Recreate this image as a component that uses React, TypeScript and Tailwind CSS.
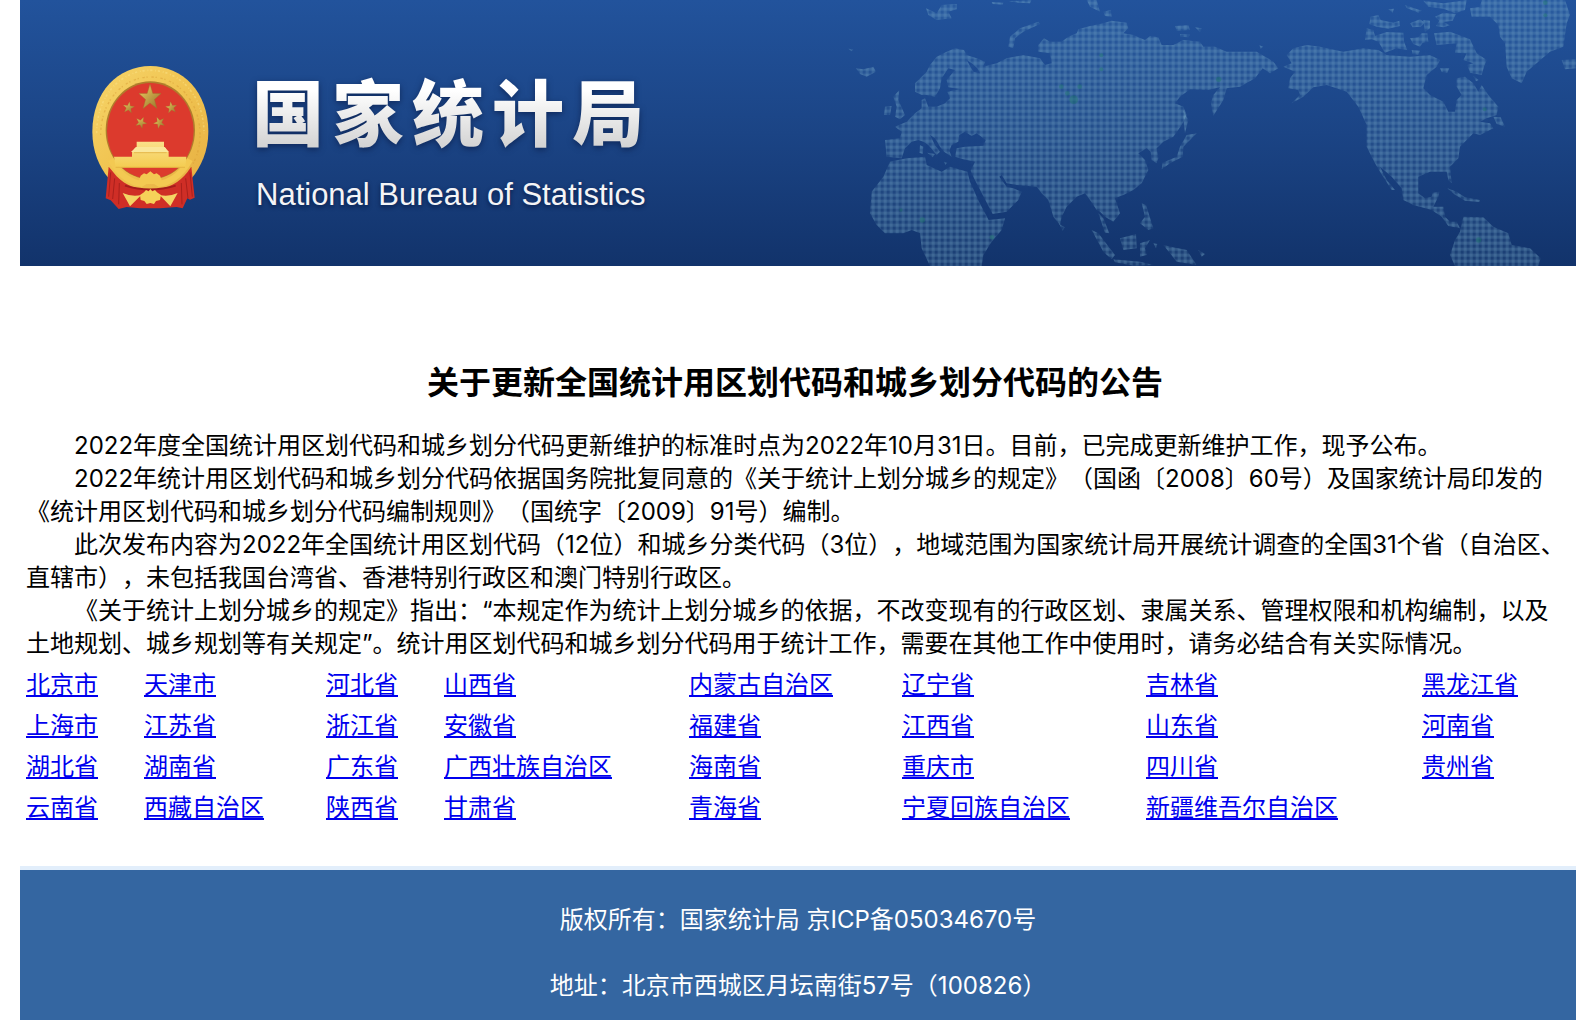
import React from "react";

const paragraphs = [
  "2022年度全国统计用区划代码和城乡划分代码更新维护的标准时点为2022年10月31日。目前，已完成更新维护工作，现予公布。",
  "2022年统计用区划代码和城乡划分代码依据国务院批复同意的《关于统计上划分城乡的规定》（国函〔2008〕60号）及国家统计局印发的《统计用区划代码和城乡划分代码编制规则》（国统字〔2009〕91号）编制。",
  "此次发布内容为2022年全国统计用区划代码（12位）和城乡分类代码（3位），地域范围为国家统计局开展统计调查的全国31个省（自治区、直辖市），未包括我国台湾省、香港特别行政区和澳门特别行政区。",
  "《关于统计上划分城乡的规定》指出：“本规定作为统计上划分城乡的依据，不改变现有的行政区划、隶属关系、管理权限和机构编制，以及土地规划、城乡规划等有关规定”。统计用区划代码和城乡划分代码用于统计工作，需要在其他工作中使用时，请务必结合有关实际情况。",
];

const provinces = [
  "北京市", "天津市", "河北省", "山西省", "内蒙古自治区", "辽宁省", "吉林省", "黑龙江省",
  "上海市", "江苏省", "浙江省", "安徽省", "福建省", "江西省", "山东省", "河南省",
  "湖北省", "湖南省", "广东省", "广西壮族自治区", "海南省", "重庆市", "四川省", "贵州省",
  "云南省", "西藏自治区", "陕西省", "甘肃省", "青海省", "宁夏回族自治区", "新疆维吾尔自治区",
];

const STAR = "M0,-10 L2.4,-3.2 9.5,-3.1 3.8,1.3 5.9,8.1 0,4 -5.9,8.1 -3.8,1.3 -9.5,-3.1 -2.4,-3.2Z";

function Emblem() {
  return (
    <svg width="140" height="165" viewBox="0 0 420 495" role="img" aria-label="国徽" className="shrink-0">
      <defs>
        <linearGradient id="gold" x1="0" y1="0" x2="1" y2="1">
          <stop offset="0" stopColor="#f6d56a" />
          <stop offset="0.5" stopColor="#f0c350" />
          <stop offset="1" stopColor="#e6ae42" />
        </linearGradient>
        <linearGradient id="star" x1="0" y1="0" x2="1" y2="1">
          <stop offset="0" stopColor="#f0cf62" />
          <stop offset="1" stopColor="#94702a" />
        </linearGradient>
        <linearGradient id="gate" x1="0" y1="0" x2="0" y2="1">
          <stop offset="0" stopColor="#fae08a" />
          <stop offset="1" stopColor="#f4cc50" />
        </linearGradient>
      </defs>
      <path d="M37,230 C37,110 115,33 211,33 C307,33 385,110 385,230 C385,290 362,335 335,370 L300,410 120,410 86,370 C58,335 37,290 37,230Z" fill="url(#gold)" />
      <path d="M50,235 C50,122 122,46 211,46 C300,46 372,122 372,235" fill="none" stroke="#fbe487" strokeWidth="5" strokeDasharray="7 8 3 5" opacity="0.5" />
      <path d="M62,240 C62,140 128,66 211,66 C294,66 360,140 360,240 C360,290 342,325 325,350" fill="none" stroke="#d99e35" strokeWidth="4" strokeDasharray="4 11 7 5" opacity="0.5" />
      <ellipse cx="211" cy="226" rx="134" ry="147" fill="#b07c2c" />
      <ellipse cx="211" cy="228" rx="130" ry="144" fill="#dc3a2d" />
      <path d="M86,335 L100,352 C125,385 160,402 200,404 L222,404 C262,402 300,382 322,352 L334,335 344,428 330,434 322,430 308,460 290,456 240,460 180,460 140,456 116,462 92,436 77,430Z" fill="#cf2e26" />
      <path d="M92,352 L86,425 M104,370 L98,432 M118,384 L116,448 M330,352 L337,425 M317,370 L324,430 M304,384 L306,448" stroke="#a9201c" strokeWidth="3" fill="none" />
      <path d="M135,392 Q210,415 287,392" stroke="#a41d1b" strokeWidth="6" fill="none" />
      <path d="M84,318 C105,355 140,392 185,396 L200,387 222,387 237,396 C282,392 318,355 338,318 L322,310 C303,345 272,370 245,376 L240,362 230,355 222,358 211,349 200,358 192,355 182,362 177,376 C148,370 118,345 100,310Z" fill="#f3c952" />
      <path d="M102,305 H156 V292 L164,288 V280 L170,276 V260 H252 V276 L258,280 V288 L266,292 V305 H319 L316,338 H107Z" fill="url(#gate)" />
      <path d="M153,291 L168,276 H254 L267,291Z" fill="#fae79b" />
      <path d="M107,337 H315 M162,293 H260" stroke="#dda93c" strokeWidth="2" fill="none" />
      <path d="M180,420 L192,412 198,405 206,409 211,402 217,409 225,405 231,412 243,420 240,435 228,438 222,447 211,444 200,447 193,438 182,435Z" fill="#f6d259" />
      <path d="M128,414 Q155,426 184,420 L150,454Z M293,414 Q267,426 239,420 L271,454Z" fill="#f4d465" />
      <g fill="url(#star)" stroke="#9a752b" strokeWidth="0.3">
        <path d={STAR} transform="translate(210,128) scale(3.5 4)" />
        <path d={STAR} transform="translate(146,158) rotate(8) scale(1.8)" />
        <path d={STAR} transform="translate(274,158) rotate(-8) scale(1.8)" />
        <path d={STAR} transform="translate(183,203) rotate(25) scale(1.8)" />
        <path d={STAR} transform="translate(238,203) rotate(-25) scale(1.8)" />
      </g>
    </svg>
  );
}

function WorldMap() {
  return (
    <svg width="736" height="266" viewBox="0 0 2208 798" aria-hidden="true" className="ml-auto shrink-0">
      <defs>
        <pattern id="mesh" width="18" height="18" patternUnits="userSpaceOnUse">
          <rect width="18" height="18" fill="#7fb0cc" fillOpacity="0.09" />
          <rect y="5" width="18" height="9" fill="#7fb0cc" fillOpacity="0.2" />
          <rect x="5" width="9" height="18" fill="#7fb0cc" fillOpacity="0.2" />
        </pattern>
      </defs>
      <g fill="url(#mesh)">
        <path fillRule="evenodd" d="M225,250 L245,230 260,215 270,195 290,170 320,155 345,145 372,150 380,165 410,175 435,185 430,200 470,190 500,175 550,165 600,175 615,195 635,190 630,160 595,155 595,135 612,115 630,125 665,125 685,110 710,100 715,88 750,78 790,70 815,62 860,68 865,85 850,100 880,105 915,120 930,108 955,112 965,135 1000,135 1030,120 1080,125 1090,140 1125,140 1160,155 1250,155 1300,185 1315,205 1290,220 1268,205 1245,235 1200,260 1160,265 1150,300 1120,347 1113,310 1120,285 1140,262 1105,270 1050,268 1020,290 1005,310 1030,320 1040,345 1025,375 1000,410 970,425 950,445 955,475 950,490 935,480 932,455 920,445 895,460 915,480 925,510 905,550 880,570 850,585 825,595 840,640 820,665 795,650 780,635 770,630 750,600 735,580 710,590 680,620 665,650 660,675 640,650 625,600 605,580 590,560 530,555 500,550 485,525 478,530 500,560 520,565 545,575 535,600 500,635 458,642 436,600 402,535 392,512 405,485 370,478 345,470 350,445 375,440 430,437 437,420 410,400 395,408 375,395 358,405 355,425 335,435 328,452 335,470 312,455 300,440 285,415 270,405 285,435 300,455 290,465 265,435 250,425 235,420 215,425 195,445 185,475 140,470 135,420 180,415 185,395 165,380 200,365 225,340 245,325 245,300 255,295 265,320 290,320 315,310 330,295 322,275 360,267 325,262 320,240 345,210 325,205 305,235 300,265 285,290 260,285 245,285 225,275Z M380,180 L400,215 420,220 412,205 395,190Z" />
        <path d="M150,485 L200,475 255,470 260,495 305,515 330,500 382,515 390,545 417,605 446,660 495,655 485,690 455,725 430,765 425,798 270,798 245,745 240,700 215,690 190,700 135,700 110,675 90,640 95,575 130,530Z" />
        <path d="M160,290 L178,270 175,300 195,345 180,358 165,350 170,320Z M135,320 L155,318 150,345 132,345Z M48,205 L70,208 100,200 108,215 80,230 60,222Z" />
        <path d="M258,25 L290,40 305,15 350,12 350,28 325,35 335,55 290,60 265,45Z M505,140 L510,110 540,85 595,65 600,72 550,95 525,115 520,145Z M740,0 L770,0 780,35 750,20Z M790,35 L812,30 815,50 795,48Z M455,6 L490,8 488,14 458,12Z M505,4 L575,0 570,10 535,8Z" />
        <path d="M1005,78 L1045,75 1050,90 1010,92Z M1065,82 L1085,85 1080,96Z M1020,102 L1050,104 1045,112 1022,110Z M25,146 L40,148 35,154Z" />
        <path d="M1040,405 L1070,400 1050,420 1030,440 1028,470 990,490 965,508 968,488 1010,470 1020,440Z M1030,330 L1045,360 1035,400 1030,360Z" />
        <path d="M905,610 L918,615 940,685 925,690 900,670 915,650Z M755,690 L775,700 825,765 815,778 790,755Z M775,640 L790,655 808,700 795,698Z M820,778 L900,785 940,795 880,797 825,787Z M840,715 L888,702 890,745 850,750Z M900,730 L930,720 915,745 920,765 900,770Z M970,735 L1000,742 1040,750 1070,795 1010,785 990,760Z M658,672 L674,682 668,692Z M1075,750 L1095,762 1085,770Z M940,730 L952,732 948,745Z" />
        <path d="M240,435 L250,440 248,462 238,458Z M262,458 L285,462 278,472Z M312,485 L322,488 316,494Z" />
      </g>
      <g fill="url(#mesh)" transform="translate(1110,0)">
        <path d="M220,200 L245,190 230,165 250,145 290,135 330,140 400,155 460,145 505,150 530,165 600,170 660,165 690,180 680,200 650,225 640,265 660,285 700,305 715,335 735,335 740,300 755,285 740,260 740,235 765,230 790,250 805,275 815,255 835,285 865,320 860,345 830,355 810,365 840,370 850,385 810,405 790,400 750,440 745,475 720,500 725,550 715,540 710,515 660,515 625,530 625,580 645,595 665,590 668,578 688,575 685,590 670,620 700,620 705,650 720,665 740,665 750,685 715,678 695,650 665,630 610,615 580,600 575,565 545,530 510,500 530,540 555,570 545,570 510,515 495,490 470,440 470,375 445,320 410,275 350,255 310,262 280,290 245,310 270,285 265,270 235,265 240,235 255,215Z" />
        <path d="M760,650 L820,652 850,680 895,700 905,735 960,745 992,775 985,798 735,798 720,765 735,720 750,695Z M712,565 L740,575 765,592 810,600 808,606 765,602 735,584Z M850,350 L872,352 885,380 860,372Z" />
        <path d="M815,0 L1065,0 1080,45 1070,70 1060,140 1020,155 985,185 950,215 935,250 905,235 890,200 885,130 870,110 865,75 840,50 785,50 780,25 810,20Z M1055,180 L1098,178 1098,205 1065,208Z" />
        <path d="M465,120 L470,85 490,90 495,108 530,96 580,98 582,125 592,150 560,145 525,158 505,125 485,118Z M482,50 L505,45 512,60 550,68 568,62 570,78 535,86 500,80 478,72Z M535,28 L552,26 548,38Z M600,70 L630,58 645,68 632,80 608,82Z M640,60 L660,62 660,85 645,95Z M585,15 L635,32 625,38 590,24Z M640,2 L700,10 770,0 765,30 735,40 700,26 655,20Z M675,50 L700,38 738,42 728,62 700,66 720,76 700,82 678,78 688,62Z M600,115 L625,112 635,100 652,100 655,125 638,128 630,140 610,132Z M672,100 L720,95 780,118 800,160 830,180 822,200 815,225 780,218 772,195 790,190 760,180 770,160 735,158 740,130 680,135Z M605,150 L630,152 625,164 608,162Z M690,205 L718,205 712,218 695,216Z M790,228 L806,240 798,244Z M148,136 L160,140 152,146Z" />
      </g>
      <g fill="#1f7a68" fillOpacity="0.4">
        <circle cx="701" cy="299" r="13" />
        <circle cx="682" cy="280" r="7" />
        <circle cx="664" cy="260" r="7" />
        <circle cx="719" cy="260" r="7" />
        <circle cx="784" cy="166" r="6" />
        <circle cx="784" cy="208" r="6" />
        <circle cx="247" cy="660" r="8" />
        <circle cx="183" cy="630" r="5" />
        <circle cx="456" cy="712" r="7" />
        <circle cx="1136" cy="238" r="8" />
        <circle cx="1916" cy="720" r="8" />
        <circle cx="1934" cy="328" r="6" />
        <circle cx="2116" cy="8" r="7" />
        <circle cx="2116" cy="46" r="6" />
      </g>
    </svg>
  );
}

export default function App() {
  return (
    <div className="ml-5 mr-3.5 bg-white font-['Inter','Noto_Sans_CJK_SC',sans-serif] text-2xl leading-[33px] text-black [text-spacing-trim:space-all]" lang="zh-CN">
      <header className="flex overflow-hidden bg-linear-to-b from-[#22539c] via-[#1b4485] to-[#12336b]">
        <div className="flex shrink-0 gap-8 pt-[55px] pl-15">
          <Emblem />
          <div className="pt-2">
            <h2 className="flex gap-2 bg-linear-to-b from-white from-30% to-[#d4d4d4] to-90% bg-clip-text font-['Noto_Sans_CJK_SC',sans-serif] text-7xl leading-[92px] font-black text-transparent drop-shadow-[0_2px_3px_rgba(5,20,60,0.6)]">
              {"国家统计局".split("").map((c) => (
                <span key={c}>{c}</span>
              ))}
            </h2>
            <p className="pt-5 pl-1 font-['Liberation_Sans',sans-serif] text-[31px] leading-10 whitespace-nowrap text-[#f4f4f6] [text-shadow:0_2px_4px_rgba(5,20,60,0.8)]">
              National Bureau of Statistics
            </p>
          </div>
        </div>
        <WorldMap />
      </header>

      <main className="px-1.5 pt-[97px] pb-[42px]">
        <h1 className="pr-1.5 text-center text-[32px] leading-10 font-bold">
          关于更新全国统计用区划代码和城乡划分代码的公告
        </h1>
        <div className="pt-[26px]">
          {paragraphs.map((p) => (
            <p key={p} className="indent-12">{p}</p>
          ))}
        </div>
        <ul className="grid grid-cols-[118fr_182fr_118fr_245fr_213fr_244fr_276fr_148fr] gap-y-2 pt-2">
          {provinces.map((name) => (
            <li key={name} className="whitespace-nowrap">
              <a href="#" className="text-[#0000ee] underline decoration-2 underline-offset-2">{name}</a>
            </li>
          ))}
        </ul>
      </main>

      <footer className="border-t-4 border-[#e2eefb] bg-[#3466a1] pt-[33px] pb-[18px] text-center text-white">
        <p>版权所有：国家统计局 京ICP备05034670号</p>
        <p className="pt-[33px]">地址：北京市西城区月坛南街57号（100826）</p>
      </footer>
    </div>
  );
}
